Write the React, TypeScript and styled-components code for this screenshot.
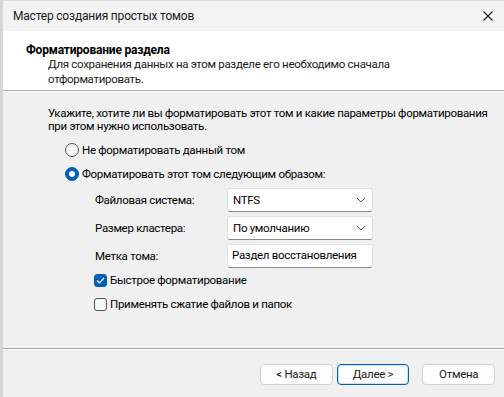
import styled, { createGlobalStyle } from 'styled-components'

const GlobalStyle = createGlobalStyle`
  html, body {
    margin: 0;
    padding: 0;
    background: #f0f0f0;
  }
  * {
    box-sizing: border-box;
  }
`;

const Window = styled.div`
  width: 504px;
  height: 397px;
  display: flex;
  flex-direction: column;
  background: #f0f0f0;
  border-left: 3px solid #d6d6d6;
  border-top: 1px solid #dcdcdc;
  font-family: Roboto, "Noto Sans", sans-serif;
  font-size: 11.5px;
  letter-spacing: -0.3px;
  color: #000;
  white-space: nowrap;
  overflow: hidden;
`;

const TitleBar = styled.div`
  height: 30px;
  display: flex;
  align-items: center;
  justify-content: space-between;
  padding: 0 10px 0 10px;
  background: #f3f3f3;
`;

const TitleText = styled.span`
  font-size: 12px;
  letter-spacing: -0.2px;
  color: #1a1a1a;
`;

const CloseIcon = styled.svg`
  width: 10px;
  height: 10px;
  margin-right: 1px;
`;

const Header = styled.div`
  height: 60px;
  background: #fff;
  padding: 12px 0 0 23px;
  border-bottom: 1px solid #a9a9a9;
`;

const HeaderTitle = styled.div`
  font-weight: 700;
  font-size: 12px;
  letter-spacing: -0.2px;
  line-height: 14px;
`;

const HeaderText = styled.div`
  padding-left: 22px;
  line-height: 15px;
  color: #1a1a1a;
`;

const Body = styled.div`
  flex: 1;
  padding: 15px 0 0 45px;
  border-top: 1px solid #fff;
`;

const Intro = styled.p`
  margin: 0 0 5px 0;
  line-height: 13px;
`;

const OptionRow = styled.label<{ indent: number }>`
  display: flex;
  align-items: center;
  gap: 3px;
  height: 24px;
  padding-left: ${p => p.indent}px;
`;

const Radio = styled.span<{ checked?: boolean }>`
  width: 14px;
  height: 14px;
  border-radius: 50%;
  border: 1px solid ${p => (p.checked ? '#005fb8' : '#555')};
  background: ${p => (p.checked ? '#005fb8' : '#f7f7f7')};
  display: flex;
  align-items: center;
  justify-content: center;
  &::after {
    content: '';
    width: 6px;
    height: 6px;
    border-radius: 50%;
    background: #fff;
    display: ${p => (p.checked ? 'block' : 'none')};
  }
`;

const Checkbox = styled.span<{ checked?: boolean }>`
  width: 13px;
  height: 13px;
  border-radius: 3px;
  border: 1px solid ${p => (p.checked ? '#005fb8' : '#555')};
  background: ${p => (p.checked ? '#005fb8' : '#f7f7f7')};
  display: flex;
  align-items: center;
  justify-content: center;
`;

const FieldGrid = styled.div`
  display: grid;
  grid-template-columns: 132px 146px;
  row-gap: 4px;
  padding-left: 47px;
  margin: 2px 0 0 0;
  align-items: center;
`;

const FieldLabel = styled.span`
  line-height: 14px;
`;

const Select = styled.div`
  height: 24px;
  background: #fff;
  border: 1px solid #e0e0e0;
  border-bottom-color: #8a8a8a;
  border-radius: 3px;
  display: flex;
  align-items: center;
  justify-content: space-between;
  padding: 0 6px 0 5px;
`;

const Input = styled.div`
  height: 24px;
  background: #fff;
  border: 1px solid #e4e4e4;
  border-bottom: 1px solid #8a8a8a;
  border-radius: 3px;
  display: flex;
  align-items: center;
  padding: 0 4px 3px 4px;
`;

const Footer = styled.div`
  height: 49px;
  border-top: 1px solid #a9a9a9;
  box-shadow: inset 0 1px 0 #fff;
  display: flex;
  align-items: center;
  padding: 2px 9px 0 257px;
`;

const Button = styled.button<{ primary?: boolean; gapLeft?: number }>`
  width: 73px;
  height: 21px;
  margin-left: ${p => p.gapLeft ?? 0}px;
  background: #fdfdfd;
  border: 1px solid ${p => (p.primary ? '#005fb8' : '#d0d0d0')};
  box-shadow: ${p => (p.primary ? 'inset 0 0 0 1px #cfe0f2' : 'none')};
  border-radius: 4px;
  font-family: Roboto, "Noto Sans", sans-serif;
  font-size: 11.5px;
  letter-spacing: -0.3px;
  color: #1a1a1a;
  padding: 0;
`;

const Chevron = () => (
  <svg width="10" height="6" viewBox="0 0 10 6">
    <path d="M1 1 L5 5 L9 1" fill="none" stroke="#606060" strokeWidth="1" />
  </svg>
);

const App = () => {
  return (
    <>
      <GlobalStyle />
      <Window>
        <TitleBar>
          <TitleText>Мастер создания простых томов</TitleText>
          <CloseIcon viewBox="0 0 10 10">
            <path d="M0.5 0.5 L9.5 9.5 M9.5 0.5 L0.5 9.5" stroke="#1a1a1a" strokeWidth="1.1" />
          </CloseIcon>
        </TitleBar>
        <Header>
          <HeaderTitle>Форматирование раздела</HeaderTitle>
          <HeaderText>
            Для сохранения данных на этом разделе его необходимо сначала
            <br />
            отформатировать.
          </HeaderText>
        </Header>
        <Body>
          <Intro>
            Укажите, хотите ли вы форматировать этот том и какие параметры форматирования
            <br />
            при этом нужно использовать.
          </Intro>
          <OptionRow indent={17}>
            <Radio />
            Не форматировать данный том
          </OptionRow>
          <OptionRow indent={17}>
            <Radio checked />
            Форматировать этот том следующим образом:
          </OptionRow>
          <FieldGrid>
            <FieldLabel>Файловая система:</FieldLabel>
            <Select>
              NTFS
              <Chevron />
            </Select>
            <FieldLabel>Размер кластера:</FieldLabel>
            <Select>
              По умолчанию
              <Chevron />
            </Select>
            <FieldLabel>Метка тома:</FieldLabel>
            <Input>Раздел восстановления</Input>
          </FieldGrid>
          <OptionRow indent={46}>
            <Checkbox checked>
              <svg width="9" height="7" viewBox="0 0 9 7">
                <path d="M1 3.5 L3.5 6 L8 1" fill="none" stroke="#fff" strokeWidth="1.2" />
              </svg>
            </Checkbox>
            Быстрое форматирование
          </OptionRow>
          <OptionRow indent={46}>
            <Checkbox />
            Применять сжатие файлов и папок
          </OptionRow>
        </Body>
        <Footer>
          <Button>&lt; Назад</Button>
          <Button primary gapLeft={4}>Далее &gt;</Button>
          <Button gapLeft={13}>Отмена</Button>
        </Footer>
      </Window>
    </>
  );
};

export default App;
